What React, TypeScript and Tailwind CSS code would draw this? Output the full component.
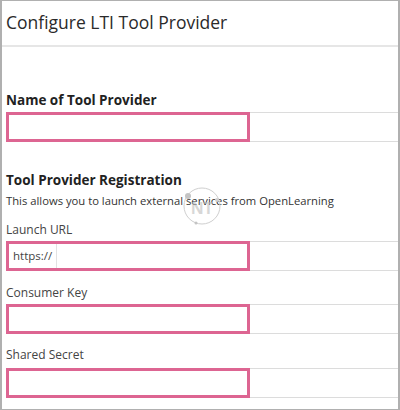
import React from 'react';

const font = { fontFamily: '"Open Sans", "Noto Sans", sans-serif' };

function Field({ prefix }: { prefix?: string }) {
  return (
    <div className="ml-[4px] flex h-[30px]">
      <div className="flex w-[244px] border-[3px] border-[#dd6592] bg-white">
        {prefix && (
          <span className="flex items-center border-r border-[#e2e2e2] pl-[4px] pr-[4px] text-[11.5px] text-[#444]">
            {prefix}
          </span>
        )}
      </div>
      <div className="flex-1 border-y border-[#dcdcdc]" />
    </div>
  );
}

export default function App() {
  return (
    <div className="relative h-[410px] w-[400px] bg-white text-[#333]" style={font}>
      <div className="flex h-full flex-col border-y border-l-2 border-r-2 border-[#b0b0b0]">
        <div className="flex h-[46px] items-center border-b-2 border-[#e6e6e6] pl-[4px]">
          <h1 className="text-[17.5px] font-medium leading-none text-[#2a2a2a]">Configure LTI Tool Provider</h1>
        </div>

        <div className="pt-[44px]">
          <h2 className="pl-[4px] text-[13.5px] font-bold leading-[18px] text-[#222]">Name of Tool Provider</h2>
          <div className="mt-[3px]">
            <Field />
          </div>

          <h2 className="mt-[29px] pl-[4px] text-[13.5px] font-bold leading-[18px] text-[#222]">
            Tool Provider Registration
          </h2>
          <p className="mt-[4px] pl-[4px] text-[11.25px] leading-[16px] text-[#333]">
            This allows you to launch external services from OpenLearning
          </p>

          <label className="mt-[12px] block pl-[4px] text-[12px] leading-[18px] text-[#444]">Launch URL</label>
          <div className="mt-[2px]">
            <Field prefix="https://" />
          </div>

          <label className="mt-[13px] block pl-[4px] text-[12px] leading-[18px] text-[#444]">Consumer Key</label>
          <div className="mt-[2px]">
            <Field />
          </div>

          <label className="mt-[12px] block pl-[4px] text-[12px] leading-[18px] text-[#444]">Shared Secret</label>
          <div className="mt-[4px]">
            <Field />
          </div>
        </div>
      </div>

      <svg className="pointer-events-none absolute left-[180px] top-[184px]" width="44" height="44" viewBox="0 0 44 44">
        <circle cx="22" cy="22" r="18" fill="none" stroke="#cfcfcf" strokeWidth="1" />
        <circle cx="8" cy="12" r="3" fill="#c4c4c4" />
        <circle cx="37" cy="16" r="2" fill="#d0d0d0" />
        <circle cx="16" cy="39" r="1.5" fill="#c4c4c4" />
        <text x="22" y="30" textAnchor="middle" fontSize="16" fontWeight="700" fill="#bdbdbd" fillOpacity="0.6" fontFamily="Open Sans, sans-serif">NT</text>
      </svg>
    </div>
  );
}
